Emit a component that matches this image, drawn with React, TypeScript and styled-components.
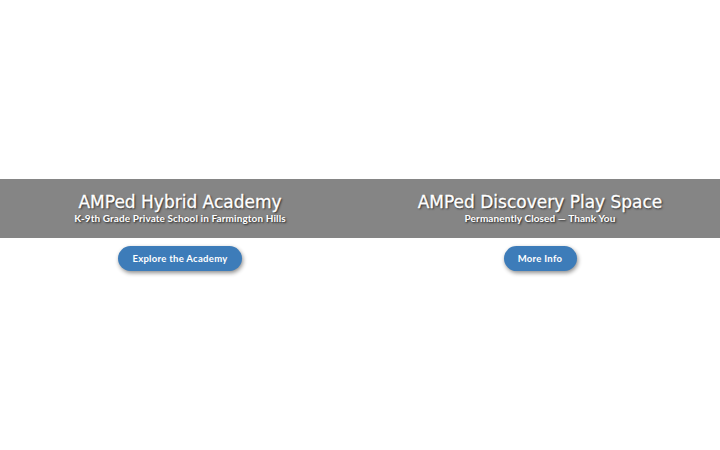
import React from "react";
import styled, { createGlobalStyle } from "styled-components";

const Global = createGlobalStyle`
  html, body {
    margin: 0;
    padding: 0;
    background: #fff;
  }
`;

const Page = styled.main`
  height: 100vh;
  display: grid;
  grid-template-columns: 1fr 1fr;
  align-content: center;
`;

const Panel = styled.section`
  display: flex;
  flex-direction: column;
  align-items: center;
  gap: 8px;
`;

const Banner = styled.div`
  align-self: stretch;
  height: 59px;
  background: #858585;
  color: #fff;
  display: flex;
  flex-direction: column;
  align-items: center;
  justify-content: center;
  text-shadow: 1px 1px 2px rgba(0, 0, 0, 0.75);
  padding-bottom: 2px;
  box-sizing: border-box;

  h2 {
    margin: 0;
    font-family: "DejaVu Sans", sans-serif;
    font-size: 17px;
    font-weight: 500;
    line-height: normal;
    -webkit-text-stroke: 0.3px #fff;
  }

  p {
    margin: 0;
    font-family: Lato, sans-serif;
    font-size: 10px;
    font-weight: 700;
    line-height: normal;
    letter-spacing: 0.1px;
  }
`;

const Button = styled.a<{ $width: number }>`
  width: ${(p) => p.$width}px;
  height: 25px;
  border-radius: 13px;
  background: #3d7cb9;
  color: #fff;
  font-family: Lato, sans-serif;
  font-size: 9.5px;
  font-weight: 700;
  letter-spacing: 0.3px;
  display: flex;
  align-items: center;
  justify-content: center;
  text-decoration: none;
  box-shadow: 1px 2px 4px rgba(0, 0, 0, 0.45);
  cursor: pointer;
`;

const items = [
  {
    title: "AMPed Hybrid Academy",
    sub: "K-9th Grade Private School in Farmington Hills",
    cta: "Explore the Academy",
    w: 124,
  },
  {
    title: "AMPed Discovery Play Space",
    sub: "Permanently Closed \u2014 Thank You",
    cta: "More Info",
    w: 73,
  },
];

export default function App() {
  return (
    <>
      <Global />
      <Page>
        {items.map((it) => (
          <Panel key={it.title}>
            <Banner>
              <h2>{it.title}</h2>
              <p>{it.sub}</p>
            </Banner>
            <Button $width={it.w}>{it.cta}</Button>
          </Panel>
        ))}
      </Page>
    </>
  );
}
